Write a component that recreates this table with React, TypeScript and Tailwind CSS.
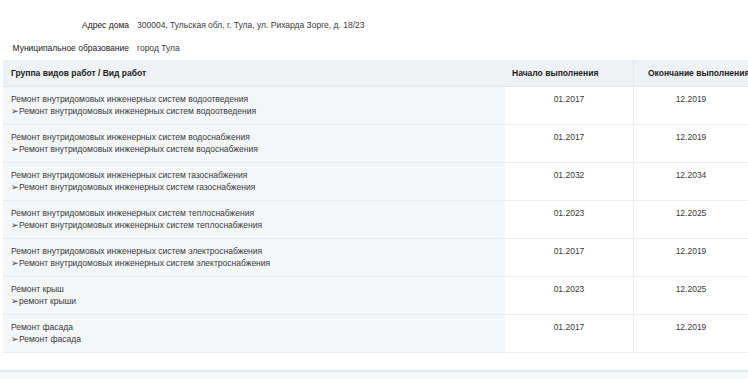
import React from "react";

const rows = [
  ["Ремонт внутридомовых инженерных систем водоотведения", "➢Ремонт внутридомовых инженерных систем водоотведения", "01.2017", "12.2019"],
  ["Ремонт внутридомовых инженерных систем водоснабжения", "➢Ремонт внутридомовых инженерных систем водоснабжения", "01.2017", "12.2019"],
  ["Ремонт внутридомовых инженерных систем газоснабжения", "➢Ремонт внутридомовых инженерных систем газоснабжения", "01.2032", "12.2034"],
  ["Ремонт внутридомовых инженерных систем теплоснабжения", "➢Ремонт внутридомовых инженерных систем теплоснабжения", "01.2023", "12.2025"],
  ["Ремонт внутридомовых инженерных систем электроснабжения", "➢Ремонт внутридомовых инженерных систем электроснабжения", "01.2017", "12.2019"],
  ["Ремонт крыш", "➢ремонт крыши", "01.2023", "12.2025"],
  ["Ремонт фасада", "➢Ремонт фасада", "01.2017", "12.2019"],
];

export default function App() {
  return (
    <div
      className="w-[748px] h-[379px] overflow-hidden bg-white text-[#3a3a3a] text-[8.5px] leading-[12px] flex flex-col"
      style={{ fontFamily: '"Liberation Sans", Arial, sans-serif' }}
    >
      <div className="pt-[19px] flex flex-col gap-[11px]">
        <div className="flex items-center">
          <div className="w-[129px] text-right text-[#222]">Адрес дома</div>
          <div className="ml-[8px]">300004, Тульская обл, г. Тула, ул. Рихарда Зорге, д. 18/23</div>
        </div>
        <div className="flex items-center">
          <div className="w-[129px] text-right text-[#222]">Муниципальное образование</div>
          <div className="ml-[8px]">город Тула</div>
        </div>
      </div>

      <div className="ml-[3px] mt-[6px] grid grid-cols-[502px_128px_130px] w-[760px]">
        <div className="bg-[#eff2f5] h-[27px] flex items-center pl-[8px] font-bold text-[#222] border-b border-[#e3e7eb]">
          Группа видов работ / Вид работ
        </div>
        <div className="bg-[#eff2f5] h-[27px] flex items-center pl-[7px] font-bold text-[#222] border-b border-[#e3e7eb]">
          Начало выполнения
        </div>
        <div className="bg-[#eff2f5] h-[27px] flex items-center pl-[14px] font-bold text-[#222] border-b border-l border-[#e3e7eb] whitespace-nowrap">
          Окончание выполнения
        </div>
        {rows.map((r, i) => (
          <React.Fragment key={i}>
            <div className="bg-[#f4f6f8] h-[38px] pl-[8px] pt-[6px] border-b border-[#e8ebee]">
              <div>{r[0]}</div>
              <div>{r[1]}</div>
            </div>
            <div className="bg-white h-[38px] pt-[6px] text-center border-b border-[#eceef0]">{r[2]}</div>
            <div className="bg-white h-[38px] pt-[6px] pr-[15px] text-center border-b border-l border-[#eceef0]">{r[3]}</div>
          </React.Fragment>
        ))}
      </div>

      <div className="mt-[17px] flex-1 border-t-2 border-[#d9ebf4] bg-[#f3f9fc]" />
    </div>
  );
}
